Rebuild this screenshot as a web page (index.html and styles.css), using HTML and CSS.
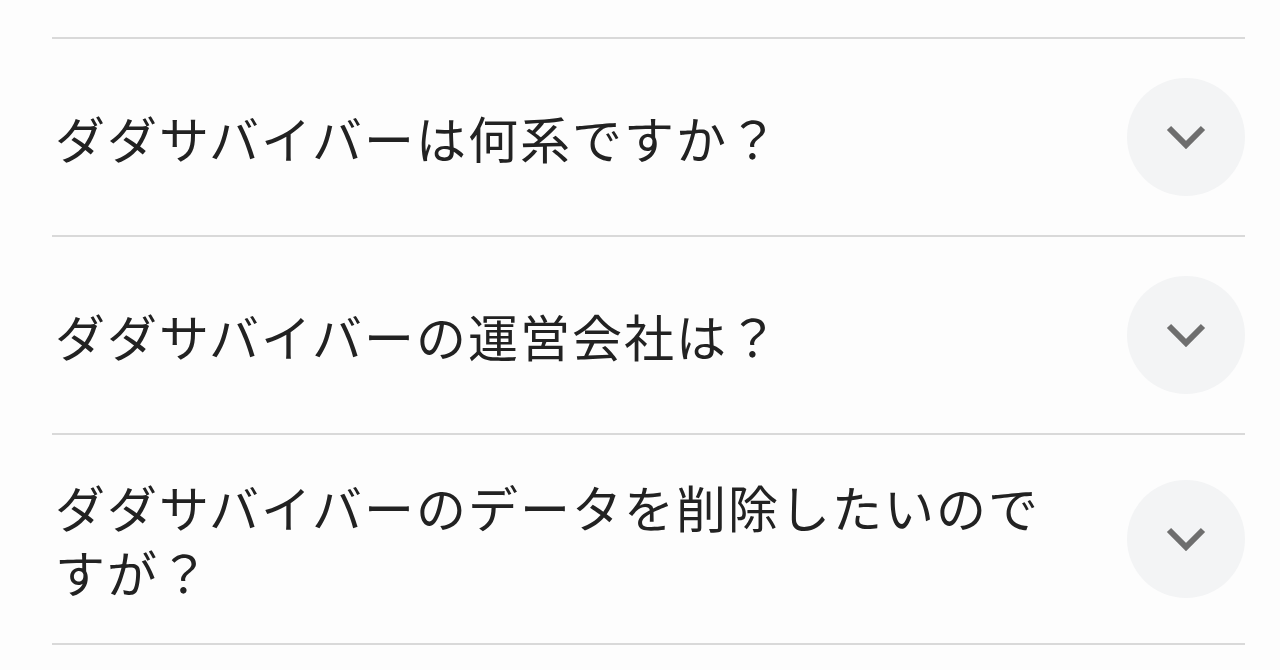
FILE: index.html
```html
<!DOCTYPE html>
<html lang="ja">
<head>
<meta charset="utf-8">
<link rel="stylesheet" href="styles.css">
</head>
<body>
<div class="faq">
  <div class="item">
    <div class="q">ダダサバイバーは何系ですか？</div>
    <div class="btn"><svg viewBox="0 0 40 24" width="40" height="24"><path d="M3 3 L20 20 L37 3" fill="none" stroke="#6e6e6e" stroke-width="6"/></svg></div>
  </div>
  <div class="item">
    <div class="q">ダダサバイバーの運営会社は？</div>
    <div class="btn"><svg viewBox="0 0 40 24" width="40" height="24"><path d="M3 3 L20 20 L37 3" fill="none" stroke="#6e6e6e" stroke-width="6"/></svg></div>
  </div>
  <div class="item">
    <div class="q">ダダサバイバーのデータを削除したいのですが？</div>
    <div class="btn"><svg viewBox="0 0 40 24" width="40" height="24"><path d="M3 3 L20 20 L37 3" fill="none" stroke="#6e6e6e" stroke-width="6"/></svg></div>
  </div>
</div>
</body>
</html>
```
FILE: styles.css
```css
html, body {
  margin: 0;
  padding: 0;
  background: #fdfdfd;
}
body {
  font-family: "Noto Sans CJK JP", "Noto Sans", sans-serif;
  color: #222222;
}
.faq {
  margin: 37px 35px 0 52px;
  border-top: 2px solid #d9d9d9;
}
.item {
  display: flex;
  align-items: center;
  padding: 39px 0;
  border-bottom: 2px solid #d9d9d9;
}
.q {
  flex: 1;
  padding-left: 3px;
  margin-right: 70px;
  font-size: 50px;
  line-height: 65px;
  letter-spacing: 2px;
}
.btn {
  width: 118px;
  height: 118px;
  border-radius: 50%;
  background: #f3f4f5;
  display: flex;
  align-items: center;
  justify-content: center;
  flex-shrink: 0;
}
.btn svg {
  display: block;
}
```
